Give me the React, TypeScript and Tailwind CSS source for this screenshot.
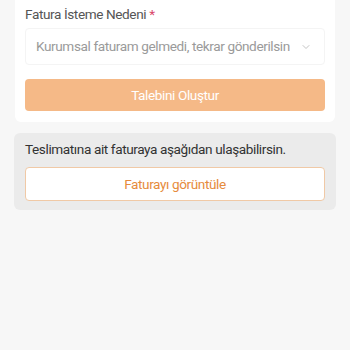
import { ChevronDown } from "lucide-react";

export default function App() {
  return (
    <div className="min-h-[350px] w-[350px] bg-[#f7f7f7] font-['Roboto',sans-serif] tracking-[-0.4px]">
      <div className="mx-[15px] rounded-b-md bg-white px-[10px] pb-[11px] pt-[6px]">
        <label className="block text-[13.6px] leading-[16px] text-[#555]">
          Fatura İsteme Nedeni <span className="text-[#d9486b]">*</span>
        </label>
        <div className="relative mt-[6px] flex h-[37px] items-center rounded border border-[#f4f4f4] px-[10px]">
          <span className="whitespace-nowrap text-[13.6px] text-[#9a9a9a]">
            Kurumsal faturam gelmedi, tekrar gönderilsin
          </span>
          <ChevronDown
            className="absolute right-[12px] h-3 w-3 text-[#b0b0b0]"
            strokeWidth={1.5}
          />
        </div>
        <button className="mt-[14px] flex h-[32px] w-full items-center justify-center rounded bg-[#f5b987] text-[13.6px] text-white">
          Talebini Oluştur
        </button>
      </div>
      <div className="mx-[14px] mt-[11px] rounded-md bg-[#ebebeb] px-[11px] pb-[9px] pt-[8px]">
        <p className="text-[13.6px] leading-[16px] text-[#333]">
          Teslimatına ait faturaya aşağıdan ulaşabilirsin.
        </p>
        <button className="mt-[10px] flex h-[34px] w-full items-center justify-center rounded border border-[#f0c9a6] bg-white text-[13.6px] text-[#e68b3c]">
          Faturayı görüntüle
        </button>
      </div>
    </div>
  );
}
